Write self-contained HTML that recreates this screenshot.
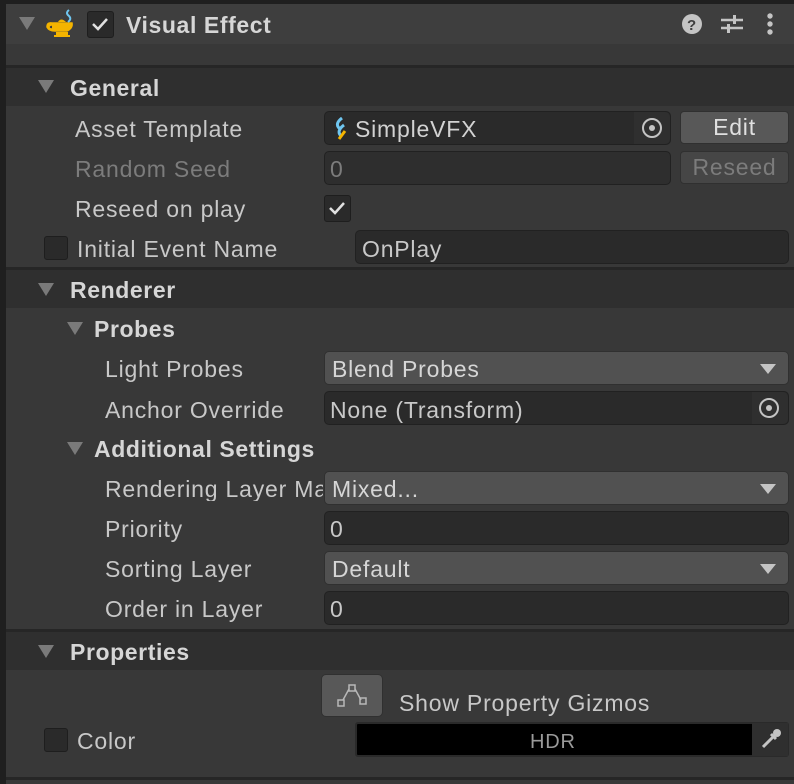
<!DOCTYPE html>
<html><head><meta charset="utf-8"><style>
*{margin:0;padding:0;box-sizing:border-box}
body{width:794px;height:784px;background:#383838;position:relative;overflow:hidden;font-family:"Liberation Sans",sans-serif;color:#c8c8c8;font-size:23px;letter-spacing:0.8px}
.a{position:absolute}
.t{position:absolute;line-height:24px;white-space:nowrap}
.b{font-weight:bold;color:#d6d6d6;letter-spacing:0.6px}
.dis{color:#7c7c7c}
.fld{position:absolute;background:#2a2a2a;border:1px solid #212121;border-radius:5px;height:34px}
.dd{position:absolute;background:#515151;border:1px solid #303030;border-radius:5px;height:34px}
.btn{position:absolute;background:#585858;border:1px solid #303030;border-radius:4px;height:33px;text-align:center;line-height:31px}
.tri{position:absolute;width:0;height:0;border-left:8px solid transparent;border-right:8px solid transparent;border-top:13px solid #7a7a7a}
.dtri{position:absolute;right:12px;top:12px;width:0;height:0;border-left:8px solid transparent;border-right:8px solid transparent;border-top:10px solid #c4c4c4}
.cb{position:absolute;width:24px;height:24px;background:#2a2a2a;border:1px solid #1e1e1e;border-radius:3px}
.sep{position:absolute;left:6px;right:0;height:3px;background:#262626}
.hdr{position:absolute;left:6px;right:0;height:38px;background:#2f2f2f}
.pick{position:absolute;right:0;top:0;width:36px;height:32px;background:#2f2f2f;border-radius:0 5px 5px 0}
</style></head><body>
<div class="a" style="left:0;top:0;width:6px;height:784px;background:#1f1f1f"></div>
<div class="a" style="left:6px;top:0;right:0;height:4px;background:#1f1f1f"></div>
<div class="a" style="left:6px;top:4px;right:0;height:40px;background:#3e3e3e"></div>
<div class="tri" style="left:19px;top:17px"></div>
<svg class="a" style="left:44px;top:8px" width="34" height="32" viewBox="0 0 34 32"><path d="M3 19 q0-5 5-4 h20 q1 5-5 8 h-12 q-6 0-8-4z M8 17 q-3 0-3 2 q0 2 3 2" fill="#f4b400" stroke="#f4b400" stroke-width="1.5"/><path d="M14 14 q3-5 8 0z" fill="#f4b400"/><rect x="12" y="24" width="12" height="3" fill="#f4b400"/><rect x="10" y="27" width="16" height="2" fill="#f4b400"/><path d="M25 2 q-4 3 0 6 q3 3-1 6" stroke="#6fc6f0" stroke-width="2" fill="none"/></svg>
<div class="cb" style="left:87px;top:11px;width:27px;height:27px"></div>
<svg class="a" style="left:90px;top:15px" width="20" height="18"><path d="M3 9 l5 5 l9-10" stroke="#e0e0e0" stroke-width="2.5" fill="none"/></svg>
<div class="t b" style="left:126px;top:13px">Visual Effect</div>
<svg class="a" style="left:681px;top:13px" width="22" height="22"><circle cx="11" cy="11" r="10" fill="#c4c4c4"/><text x="11" y="17" text-anchor="middle" font-family="Liberation Sans" font-weight="bold" font-size="15" fill="#3e3e3e">?</text></svg>
<svg class="a" style="left:720px;top:13px" width="24" height="22"><path d="M1 7h22M1 15h22" stroke="#c4c4c4" stroke-width="2.5"/><rect x="13" y="2" width="3" height="9" fill="#c4c4c4"/><rect x="7" y="11" width="3" height="9" fill="#c4c4c4"/></svg>
<svg class="a" style="left:765px;top:12px" width="10" height="24"><circle cx="5" cy="4" r="2.7" fill="#c4c4c4"/><circle cx="5" cy="12" r="2.7" fill="#c4c4c4"/><circle cx="5" cy="20" r="2.7" fill="#c4c4c4"/></svg>

<div class="sep" style="top:65px"></div>
<div class="hdr" style="top:68px"></div>
<div class="tri" style="left:38px;top:80px"></div>
<div class="t b" style="left:70px;top:76px">General</div>

<div class="t" style="left:75px;top:117px">Asset Template</div>
<div class="fld" style="left:324px;top:111px;width:347px"><div class="pick"></div></div>
<svg class="a" style="left:332px;top:117px" width="16" height="24"><path d="M10 1 q-8 6-2 11" stroke="#6fc6f0" stroke-width="3" fill="none"/><path d="M12 8 q-8 6-3 11" stroke="#6fc6f0" stroke-width="3" fill="none"/><path d="M13 14 l-6 8" stroke="#f4b400" stroke-width="3"/></svg>
<div class="t" style="left:355px;top:117px;color:#d2d2d2">SimpleVFX</div>
<svg class="a" style="left:640px;top:116px" width="24" height="24"><circle cx="12" cy="12" r="9" stroke="#c4c4c4" stroke-width="2" fill="none"/><circle cx="12" cy="12" r="3" fill="#c4c4c4"/></svg>
<div class="btn" style="left:680px;top:111px;width:109px;color:#e0e0e0">Edit</div>

<div class="t dis" style="left:75px;top:157px">Random Seed</div>
<div class="fld" style="left:324px;top:151px;width:347px;background:#2e2e2e"></div>
<div class="t dis" style="left:330px;top:157px">0</div>
<div class="btn" style="left:680px;top:151px;width:109px;background:#464646;color:#7c7c7c">Reseed</div>

<div class="t" style="left:75px;top:197px">Reseed on play</div>
<div class="cb" style="left:324px;top:195px;width:27px;height:27px"></div>
<svg class="a" style="left:327px;top:199px" width="20" height="18"><path d="M3 9 l5 5 l9-10" stroke="#e0e0e0" stroke-width="2.5" fill="none"/></svg>

<div class="cb" style="left:44px;top:236px"></div>
<div class="t" style="left:77px;top:237px">Initial Event Name</div>
<div class="fld" style="left:355px;top:230px;width:434px"></div>
<div class="t" style="left:362px;top:237px">OnPlay</div>

<div class="sep" style="top:267px"></div>
<div class="hdr" style="top:270px"></div>
<div class="tri" style="left:38px;top:283px"></div>
<div class="t b" style="left:70px;top:278px">Renderer</div>

<div class="tri" style="left:67px;top:322px"></div>
<div class="t b" style="left:94px;top:317px">Probes</div>
<div class="t" style="left:105px;top:357px">Light Probes</div>
<div class="dd" style="left:324px;top:351px;width:465px"><div class="dtri"></div></div>
<div class="t" style="left:332px;top:357px;color:#d6d6d6">Blend Probes</div>
<div class="t" style="left:105px;top:398px">Anchor Override</div>
<div class="fld" style="left:324px;top:391px;width:465px"><div class="pick"></div></div>
<div class="t" style="left:330px;top:398px">None (Transform)</div>
<svg class="a" style="left:757px;top:396px" width="24" height="24"><circle cx="12" cy="12" r="9" stroke="#c4c4c4" stroke-width="2" fill="none"/><circle cx="12" cy="12" r="3" fill="#c4c4c4"/></svg>

<div class="tri" style="left:67px;top:442px"></div>
<div class="t b" style="left:94px;top:437px">Additional Settings</div>
<div class="a" style="left:105px;top:477px;width:218px;overflow:hidden;line-height:24px;white-space:nowrap">Rendering Layer Mask</div>
<div class="dd" style="left:324px;top:471px;width:465px"><div class="dtri"></div></div>
<div class="t" style="left:332px;top:477px;color:#d6d6d6">Mixed...</div>
<div class="t" style="left:105px;top:517px">Priority</div>
<div class="fld" style="left:324px;top:511px;width:465px"></div>
<div class="t" style="left:330px;top:517px">0</div>
<div class="t" style="left:105px;top:557px">Sorting Layer</div>
<div class="dd" style="left:324px;top:551px;width:465px"><div class="dtri"></div></div>
<div class="t" style="left:332px;top:557px;color:#d6d6d6">Default</div>
<div class="t" style="left:105px;top:597px">Order in Layer</div>
<div class="fld" style="left:324px;top:591px;width:465px"></div>
<div class="t" style="left:330px;top:597px">0</div>

<div class="sep" style="top:629px"></div>
<div class="hdr" style="top:632px"></div>
<div class="tri" style="left:38px;top:645px"></div>
<div class="t b" style="left:70px;top:640px">Properties</div>

<div class="btn" style="left:321px;top:674px;width:62px;height:43px;background:#585858;border-radius:5px"></div>
<svg class="a" style="left:336px;top:682px" width="32" height="28"><path d="M7 18 L13 7 M19 7 L25 18" stroke="#b8b8b8" stroke-width="1.5"/><rect x="13" y="3" width="6" height="6" stroke="#b8b8b8" stroke-width="1.5" fill="none"/><rect x="2" y="18" width="6" height="6" stroke="#b8b8b8" stroke-width="1.5" fill="none"/><rect x="24" y="16" width="6" height="6" stroke="#b8b8b8" stroke-width="1.5" fill="none"/></svg>
<div class="t" style="left:399px;top:691px">Show Property Gizmos</div>

<div class="cb" style="left:44px;top:728px"></div>
<div class="t" style="left:77px;top:729px">Color</div>
<div class="a" style="left:355px;top:722px;width:434px;height:35px;background:#000;border:2px solid #2a2a2a;border-radius:3px"></div>
<div class="a" style="left:752px;top:723px;width:36px;height:33px;background:#2f2f2f"></div>
<div class="t" style="left:530px;top:730px;font-size:20px;color:#9a9a9a">HDR</div>
<svg class="a" style="left:759px;top:727px" width="24" height="24"><path d="M4 20 L14 10" stroke="#c4c4c4" stroke-width="3"/><path d="M12 7 L17 12" stroke="#c4c4c4" stroke-width="3"/><circle cx="18" cy="6" r="4" fill="#c4c4c4"/></svg>

<div class="sep" style="top:777px"></div>
</body></html>
